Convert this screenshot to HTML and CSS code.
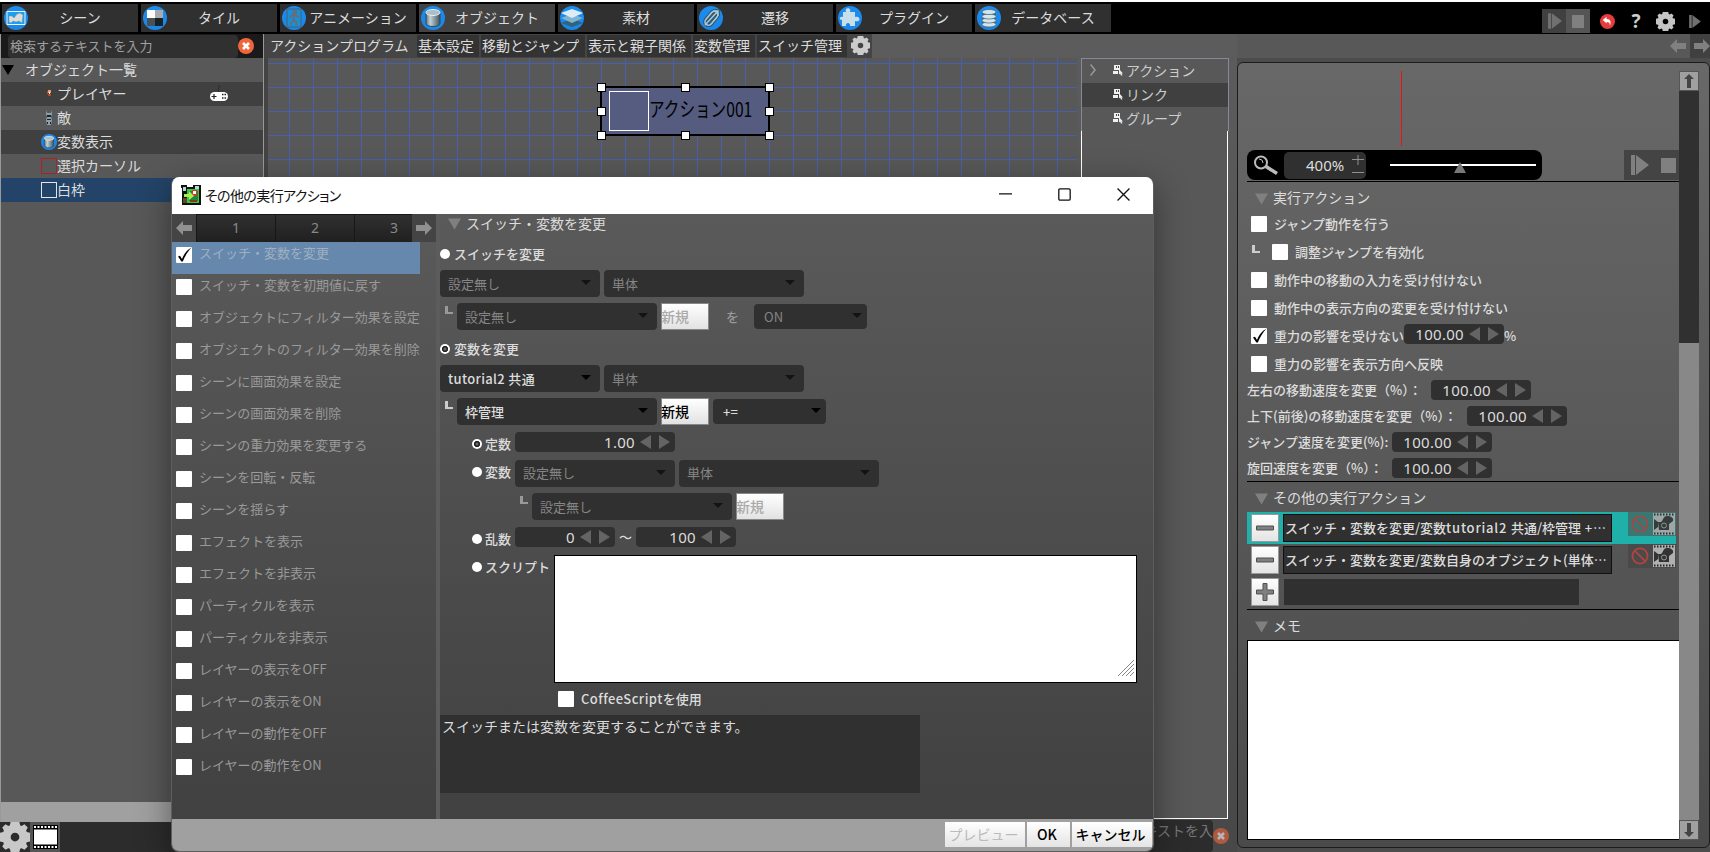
FILE: index.html
```html
<!DOCTYPE html>
<html lang="ja">

<head>
    <meta charset="UTF-8">
    <title>オブジェクト</title>
    <link rel="stylesheet" href="styles.css">
</head>

<body>
    <svg class="defs">
        <linearGradient id="blue" x1="0" y1="0" x2="0" y2="1">
            <stop offset="0" stop-color="#1c8cf0" />
            <stop offset="1" stop-color="#1a86e8" />
        </linearGradient>
        <linearGradient id="steel" x1="0" y1="0" x2="1" y2="0">
            <stop offset="0" stop-color="#5d747c" />
            <stop offset="0.3" stop-color="#c4d2d6" />
            <stop offset="1" stop-color="#3f555e" />
        </linearGradient>
        <symbol id="i-gear" viewBox="0 0 24 24">
            <path fill-rule="evenodd" d="M8.500 0h7l.6 2.600 1.200.5L19.600 1.800 22.200 4.400 20.900 6.700 21.400 7.900 24 8.500v7l-2.600.6-.5 1.200 1.300 2.300-2.600 2.600-2.300-1.300-1.200.5-.6 2.600h-7l-.6-2.600-1.200-.5-2.300 1.300-2.600-2.600 1.300-2.300-.5-1.200L0 15.500v-7l2.600-.6.5-1.200L1.800 4.400 4.400 1.800l2.300 1.300 1.200-.5zM12 8.500a3.500 3.500 0 1 0 0 7 3.500 3.500 0 0 0 0-7z" />
        </symbol>
        <symbol id="i-close" viewBox="0 0 16 16">
            <circle cx="8" cy="8" r="8" fill="#f0663c" />
            <path d="M5 5l6 6M11 5l-6 6" stroke="#fff" stroke-width="2.600" />
        </symbol>
        <symbol id="i-can" viewBox="0 0 24 24">
            <circle cx="12" cy="12" r="12" fill="url(#blue)" />
            <path d="M5 7v10.500c1 4 13 4 14 0V7z" fill="url(#steel)" stroke="#34484f" />
            <ellipse cx="12" cy="6.500" rx="7" ry="3" fill="#aebfc4" stroke="#e8f0f2" />
        </symbol>
        <symbol id="i-play" viewBox="0 0 18 20">
            <path d="M0 0h4v20H0zM5 0l13 10L5 20z" />
        </symbol>
        <symbol id="i-left" viewBox="0 0 16 14">
            <path d="M0 7l7-7v4h9v6H7v4z" />
        </symbol>
        <symbol id="i-right" viewBox="0 0 16 14">
            <path d="M16 7L9 0v4H0v6h9v4z" />
        </symbol>
        <symbol id="i-check" viewBox="0 0 16 16">
            <path d="M2 9.500l2-.7 2 3.200C8 7 10.500 3.500 15.500 .5 11.500 5 9 9 6.800 14.500H5.400z" fill="#000" />
        </symbol>
        <symbol id="i-puppet" viewBox="0 0 10 12">
            <path d="M1 1h6v5H1zM0 7h5v3H0zM6 5l4 4.500H8.500l1 2H8l-1-2-1 1z" fill="#f0f0f0" />
            <path d="M3 2h1v2H3zM5 2h1v2H5z" fill="#444" />
        </symbol>
        <symbol id="i-ban" viewBox="0 0 18 18">
            <g fill="none" stroke-width="1.800">
                <circle cx="9" cy="9" r="7.600" />
                <path d="M3.600 3.600l10.800 10.800" />
            </g>
        </symbol>
        <symbol id="i-cam" viewBox="0 0 22 22">
            <rect width="22" height="22" class="film" />
            <path d="M1 1.500h20M1 20.500h20" stroke="#222" stroke-width="2" stroke-dasharray="1.500 1.500" />
            <path d="M1 6l4 3v5l-4 3zM5 9h3c2-1 2-6 6-6s7 2 6 5l-4 3v6H6zM8 17l-2 3M15 17l2 3" class="body" />
            <circle cx="11" cy="12.500" r="2.500" fill="none" stroke="#999" />
        </symbol>
        <symbol id="i-down" viewBox="0 0 14 12">
            <path d="M0 0h14L7 12z" fill="#808080" />
        </symbol>
    </svg>

    <header class="topbar">
        <nav class="tabs">
            <div class="tab">
                <svg viewBox="0 0 24 24"><circle cx="12" cy="12" r="12" fill="url(#blue)" /><path d="M3 5.500h18v13H3z" fill="#1aa0ee" stroke="#e8f4fb" /><path d="M5 10h3l2 2 3-4 3-1 3 2-1 8-3-2-3 1-3-1-2 2-2-1z" fill="#ddd" stroke="#888" stroke-width=".5" /></svg>
                <span>シーン</span>
            </div>
            <div class="tab">
                <svg viewBox="0 0 24 24"><circle cx="12" cy="12" r="12" fill="url(#blue)" /><path d="M4 4h8v8H4z" fill="#fff" /><path d="M12 4h8v8h-8z" fill="#aaa" /><path d="M4 12h8v8H4z" fill="#4a5258" /><path d="M12 12h8v8h-8z" fill="#16222a" /></svg>
                <span>タイル</span>
            </div>
            <div class="tab">
                <svg viewBox="0 0 24 24"><circle cx="12" cy="12" r="12" fill="url(#blue)" /><path d="M5 3h14v18H5z" fill="#1a90dc" stroke="#47616f" /><g fill="none" stroke="#60707a" stroke-width="2"><circle cx="13" cy="6" r="1.500" /><path d="M8 12l2-3h4l3 3M12.500 9l-1 5 3 2v4M11.500 14L8 19" /></g></svg>
                <span>アニメーション</span>
            </div>
            <div class="tab active">
                <svg><use href="#i-can" /></svg>
                <span>オブジェクト</span>
            </div>
            <div class="tab">
                <svg viewBox="0 0 24 24"><circle cx="12" cy="12" r="12" fill="url(#blue)" /><path d="M1 17l11-4 11 4-11 4z" fill="#33627a" /><path d="M1 12l11-4 11 4-11 5z" fill="#7fb4d0" /><path d="M1 7l11-4 11 4-11 5z" fill="#dcecf4" /></svg>
                <span>素材</span>
            </div>
            <div class="tab">
                <svg viewBox="0 0 24 24"><circle cx="12" cy="12" r="12" fill="url(#blue)" /><g fill="none" stroke="#2f5468" stroke-width="3.600"><rect x="4" y="9" width="16" height="7" rx="3.500" transform="rotate(-50 12 12)" /><path d="M6 19L19 5M14 5h5v5" /></g><g fill="none" stroke="#a8c8d8" stroke-width="1.600"><rect x="4" y="9" width="16" height="7" rx="3.500" transform="rotate(-50 12 12)" /><path d="M6 19L19 5M14 5h5v5" /></g></svg>
                <span>遷移</span>
            </div>
            <div class="tab">
                <svg viewBox="0 0 24 24"><circle cx="12" cy="12" r="12" fill="url(#blue)" /><path d="M5 6h3c-2-5 6-5 4 0h5v5c6-2 6 6 0 4v5h-5c1-4-5-4-4 0H4v-6c-3 0-3-4 1-3z" fill="#c8dfea" /></svg>
                <span>プラグイン</span>
            </div>
            <div class="tab">
                <svg viewBox="0 0 24 24"><circle cx="12" cy="12" r="12" fill="url(#blue)" /><path d="M5 5v14c1 3 13 3 14 0V5z" fill="#1d6da0" /><g fill="#d4e4ea" stroke="#44687a" stroke-width=".7"><ellipse cx="12" cy="18.500" rx="7" ry="2.500" /><ellipse cx="12" cy="14.500" rx="7" ry="2.500" /><ellipse cx="12" cy="10.500" rx="7" ry="2.500" /><ellipse cx="12" cy="6" rx="7" ry="2.500" /></g></svg>
                <span>データベース</span>
            </div>
        </nav>
        <div class="tools">
            <div class="tool dark"><svg class="t-play"><use href="#i-play" /></svg></div>
            <div class="tool mid"><i class="stop"></i></div>
            <div class="tool w34"><svg class="t-undo" viewBox="0 0 16 16"><circle cx="8" cy="8" r="8" fill="#e63c3c" /><path d="M3 6.500L7 3v2.200c4 0 5.500 3 3.500 7.300.2-3-1-4-3.500-4V10z" fill="#fff" /></svg></div>
            <div class="tool w24 help">?</div>
            <div class="tool w34"><svg class="t-gear"><use href="#i-gear" /></svg></div>
            <div class="tool w22"><svg class="t-step"><use href="#i-play" /></svg></div>
        </div>
    </header>

    <main class="main">
        <aside class="objects">
            <div class="search">
                <div class="search-input">検索するテキストを入力</div>
                <svg class="clear"><use href="#i-close" /></svg>
            </div>
            <div class="tree">
                <div class="tree-row root"><i class="tri"></i><span>オブジェクト一覧</span></div>
                <div class="tree-row odd">
                    <svg class="pic" viewBox="0 0 16 16"><path d="M7 4h3v3H7z" fill="#e8a070" /><path d="M6 5h1v3H6zM7 8h3v2H7z" fill="#b44a28" /><path d="M8 6h1v2H8z" fill="#fff" /></svg>
                    <span>プレイヤー</span>
                    <svg class="pad" viewBox="0 0 20 18"><path d="M9 0q3 1 1 3t0 4" fill="none" stroke="#2c2c2c" /><rect x="1" y="7" width="18" height="9" rx="4.500" fill="#fff" /><path d="M5 9v5M2.500 11.500h5" stroke="#222" stroke-width="1.200" /><path d="M13 9.500h4M13 13h4" stroke="#222" stroke-width="1.500" stroke-dasharray="1.500 1" /></svg>
                </div>
                <div class="tree-row">
                    <svg class="pic" viewBox="0 0 16 16"><path d="M5 0l1 3h4l1-3v4l-1 3 1 3-1 5H6l-1-5 1-3-1-3z" fill="#8ba0ac" /><path d="M6 5h4v2H6zM6 9h4v1H6zM6 12h1v2H6zM9 12h1v2H9z" fill="#1c242a" /></svg>
                    <span>敵</span>
                </div>
                <div class="tree-row odd"><svg class="pic"><use href="#i-can" /></svg><span>変数表示</span></div>
                <div class="tree-row"><i class="pic frame red"></i><span>選択カーソル</span></div>
                <div class="tree-row selected"><i class="pic frame white"></i><span>白枠</span></div>
            </div>
            <div class="hscroll"></div>
            <div class="status">
                <svg class="s-gear"><use href="#i-gear" /></svg>
                <div class="s-film"><svg viewBox="0 0 25 24"><path d="M0 0h25v24H0z" /><path d="M1 4.500h23v15H1z" fill="#fff" /><path d="M1 2h23M1 22h23" stroke="#fff" stroke-width="2" stroke-dasharray="2 1.500" /></svg></div>
            </div>
        </aside>

        <section class="center">
            <div class="subtabs">
                <div class="subtab current">アクションプログラム</div>
                <div class="subtab w62">基本設定</div>
                <div class="subtab w104">移動とジャンプ</div>
                <div class="subtab w104">表示と親子関係</div>
                <div class="subtab w62">変数管理</div>
                <div class="subtab w90">スイッチ管理</div>
                <div class="subtab gear"><svg><use href="#i-gear" /></svg></div>
            </div>
            <div class="work">
                <div class="canvas">
                    <div class="node">
                        <i class="thumb"></i>
                        <span>アクション001</span>
                        <i class="h h1"></i><i class="h h2"></i><i class="h h3"></i><i class="h h4"></i>
                        <i class="h h5"></i><i class="h h6"></i><i class="h h7"></i><i class="h h8"></i>
                    </div>
                </div>
                <div class="palette">
                    <div class="palette-head">
                        <div class="p-row"><svg class="chev" viewBox="0 0 6 12"><path d="M.5 .5L5 6 .5 11.500" /></svg><svg class="pup"><use href="#i-puppet" /></svg>アクション</div>
                        <div class="p-row odd"><svg class="pup"><use href="#i-puppet" /></svg>リンク</div>
                        <div class="p-row"><svg class="pup"><use href="#i-puppet" /></svg>グループ</div>
                    </div>
                    <div class="palette-body"></div>
                    <div class="palette-search">
                        <div class="ps-input">キストを入</div>
                        <svg><use href="#i-close" /></svg>
                    </div>
                </div>
            </div>
        </section>

        <aside class="side">
            <div class="pager-mini"><div><svg><use href="#i-left" /></svg></div><div class="on"><svg><use href="#i-right" /></svg></div></div>
            <div class="panel">
                <div class="panel-body">
                    <div class="preview"><i></i></div>
                    <div class="zoombar">
                        <div class="zoom">
                            <svg class="lens" viewBox="0 0 24 20"><g fill="none" stroke="#bbb"><circle cx="7" cy="7.500" r="6" stroke-width="2" /><path d="M12 11.500l11 7" stroke-width="3.500" /><path d="M5 4q4 0 4 4" stroke-width="1" /></g></svg>
                            <div class="zoom-val">400%<svg viewBox="0 0 12 20"><path d="M6 0v10M0 4.500h12M0 17.500h12" /></svg></div>
                            <div class="slider"><svg viewBox="0 0 12 11"><path d="M6 0l6 11H0z" /></svg></div>
                        </div>
                        <div class="transport"><svg class="tp"><use href="#i-play" /></svg><i></i></div>
                    </div>
                    <div class="group-head"><svg><use href="#i-down" /></svg>実行アクション</div>
                    <div class="opt"><i class="cb"></i>ジャンプ動作を行う</div>
                    <div class="opt"><i class="ell"></i><i class="cb"></i>調整ジャンプを有効化</div>
                    <div class="opt"><i class="cb"></i>動作中の移動の入力を受け付けない</div>
                    <div class="opt"><i class="cb"></i>動作中の表示方向の変更を受け付けない</div>
                    <div class="opt"><i class="cb"><svg><use href="#i-check" /></svg></i>重力の影響を受けない<div class="spin up"><b>100.00</b><i class="la"></i><i class="ra"></i></div>%</div>
                    <div class="opt"><i class="cb"></i>重力の影響を表示方向へ反映</div>
                    <div class="speeds">
                        <div class="speed"><span>左右の移動速度を変更（%）：</span><div class="spin"><b>100.00</b><i class="la"></i><i class="ra"></i></div></div>
                        <div class="speed"><span class="l2">上下(前後)の移動速度を変更（%）：</span><div class="spin"><b>100.00</b><i class="la"></i><i class="ra"></i></div></div>
                        <div class="speed"><span class="l3">ジャンプ速度を変更(%):</span><div class="spin"><b>100.00</b><i class="la"></i><i class="ra"></i></div></div>
                        <div class="speed"><span class="l3">旋回速度を変更（%）：</span><div class="spin"><b>100.00</b><i class="la"></i><i class="ra"></i></div></div>
                    </div>
                    <div class="group-head lined"><svg><use href="#i-down" /></svg>その他の実行アクション</div>
                    <div class="act selected">
                        <div class="sq"><svg viewBox="0 0 18 18"><path d="M.5 7h17v4H.5z" /></svg></div>
                        <div class="act-text">スイッチ・変数を変更/変数<span>tutorial2 </span>共通/枠管理<span> +</span>…</div>
                        <div class="act-icons"><svg class="ban"><use href="#i-ban" /></svg><svg class="cam"><use href="#i-cam" /></svg></div>
                    </div>
                    <div class="act">
                        <div class="sq"><svg viewBox="0 0 18 18"><path d="M.5 7h17v4H.5z" /></svg></div>
                        <div class="act-text">スイッチ・変数を変更/変数自身のオブジェクト(単体…</div>
                        <div class="act-icons"><svg class="ban"><use href="#i-ban" /></svg><svg class="cam"><use href="#i-cam" /></svg></div>
                    </div>
                    <div class="act">
                        <div class="sq"><svg viewBox="0 0 18 18"><path d="M7 .5h4V7h6.500v4H11v6.500H7V11H.5V7H7z" /></svg></div>
                        <div class="act-empty"></div>
                    </div>
                    <div class="group-head lined memo-head"><svg><use href="#i-down" /></svg>メモ</div>
                    <div class="memo"></div>
                </div>
                <div class="vscroll">
                    <div class="vs-btn"><svg viewBox="0 0 10 14"><path d="M5 0l5 5H7v9H3V5H0z" /></svg></div>
                    <div class="vs-thumb"></div>
                    <div class="vs-track"></div>
                    <div class="vs-btn"><svg viewBox="0 0 10 14"><path d="M5 14l5-5H7V0H3v9H0z" /></svg></div>
                </div>
            </div>
        </aside>
    </main>

    <div class="dialog">
        <div class="titlebar">
            <svg class="app" viewBox="0 0 20 20"><path d="M0 0h6v2h6V0h8v20H1V3H0z" fill="#111" /><path d="M2 2h3v4H2zM14 1h4v4h-4z" fill="#b8d4dc" /><path d="M6 4h12v14H6z" fill="#3cc83c" /><path d="M8 6h9v10H8z" fill="#1c8a3c" /><path d="M11 5h5v6h-5z" fill="#c83c28" /><path d="M12 6h3v3h-3z" fill="#fff" /><path d="M3 9h5V6l5 5-5 4v-3H3z" fill="#a8f050" /><path d="M2 13h4v5H2z" fill="#5c4a24" /><path d="M9 15h7v2H9z" fill="#7c3c1c" /></svg>
            <span>その他の実行アクション</span>
            <div class="win-btns">
                <svg viewBox="0 0 12 12"><path d="M0 5.500h12" /></svg>
                <svg viewBox="0 0 12 12"><rect x=".75" y=".75" width="10.500" height="10.500" rx="1" /></svg>
                <svg viewBox="0 0 12 12"><path d="M.5 .5l11 11M11.500 .5l-11 11" /></svg>
            </div>
        </div>
        <div class="dlg-main">
            <div class="dlg-left">
                <div class="pages">
                    <div class="pg-arrow"><svg><use href="#i-left" /></svg></div>
                    <div class="pg">1</div>
                    <div class="pg">2</div>
                    <div class="pg last">3</div>
                    <div class="pg-arrow"><svg><use href="#i-right" /></svg></div>
                </div>
                <div class="item selected"><i class="cb"><svg><use href="#i-check" /></svg></i>スイッチ・変数を変更</div>
                <div class="item"><i class="cb"></i>スイッチ・変数を初期値に戻す</div>
                <div class="item"><i class="cb"></i>オブジェクトにフィルター効果を設定</div>
                <div class="item"><i class="cb"></i>オブジェクトのフィルター効果を削除</div>
                <div class="item"><i class="cb"></i>シーンに画面効果を設定</div>
                <div class="item"><i class="cb"></i>シーンの画面効果を削除</div>
                <div class="item"><i class="cb"></i>シーンの重力効果を変更する</div>
                <div class="item"><i class="cb"></i>シーンを回転・反転</div>
                <div class="item"><i class="cb"></i>シーンを揺らす</div>
                <div class="item"><i class="cb"></i>エフェクトを表示</div>
                <div class="item"><i class="cb"></i>エフェクトを非表示</div>
                <div class="item"><i class="cb"></i>パーティクルを表示</div>
                <div class="item"><i class="cb"></i>パーティクルを非表示</div>
                <div class="item"><i class="cb"></i>レイヤーの表示をOFF</div>
                <div class="item"><i class="cb"></i>レイヤーの表示をON</div>
                <div class="item"><i class="cb"></i>レイヤーの動作をOFF</div>
                <div class="item"><i class="cb"></i>レイヤーの動作をON</div>
            </div>
            <div class="dlg-right">
                <div class="dlg-head"><svg><use href="#i-down" /></svg>スイッチ・変数を変更</div>
                <div class="line r-sw"><i class="radio"></i>スイッチを変更</div>
                <div class="line sel-row off"><div class="select w160">設定無し</div><div class="select w200">単体</div></div>
                <div class="line sub-row off">
                    <i class="ell"></i><div class="select w200">設定無し</div><div class="new">新規</div><span class="wo">を</span><div class="select small">ON</div>
                </div>
                <div class="line r-var"><i class="radio on"></i>変数を変更</div>
                <div class="line sel-row"><div class="select w160 latin">tutorial2 共通</div><div class="select w200 dim">単体</div></div>
                <div class="line sub-row">
                    <i class="ell"></i><div class="select w200">枠管理</div><div class="new">新規</div><div class="select small">+=</div>
                </div>
                <div class="kinds">
                    <div class="kind k1"><i class="radio on"></i><label>定数</label><div class="spin w160"><b>1.00</b><i class="la"></i><i class="ra"></i></div></div>
                    <div class="kind k2"><i class="radio"></i><label>変数</label><div class="sel-row off"><div class="select w160">設定無し</div><div class="select w200">単体</div></div></div>
                    <div class="kind k3 sub-row off"><i class="ell"></i><div class="select w200">設定無し</div><div class="new">新規</div></div>
                    <div class="kind k4"><i class="radio"></i><label>乱数</label><div class="spin"><b>0</b><i class="la"></i><i class="ra"></i></div><span class="tilde">～</span><div class="spin"><b>100</b><i class="la"></i><i class="ra"></i></div></div>
                    <div class="kind k5">
                        <i class="radio"></i><label class="wide">スクリプト</label>
                        <div class="script"><svg viewBox="0 0 16 16"><path d="M0 16L16 0M4 16L16 4M8 16l8-8M12 16l4-4" /></svg></div>
                    </div>
                    <div class="coffee"><i class="cb"></i><span>CoffeeScript</span>を使用</div>
                </div>
                <div class="info">スイッチまたは変数を変更することができます。</div>
            </div>
        </div>
        <div class="dlg-foot">
            <div class="btn disabled">プレビュー</div>
            <div class="btn ok">OK</div>
            <div class="btn">キャンセル</div>
        </div>
    </div>
</body>

</html>
```

FILE: styles.css
```css
* {
    box-sizing: border-box;
}

body {
    margin: 0;
    width: 1710px;
    height: 852px;
    overflow: hidden;
    position: relative;
    border-top: 2px solid #fff;
    background: #4c4c4c;
    color: #dcdcdc;
    font-family: "Noto Sans CJK JP", "Noto Sans", sans-serif;
    font-size: 14px;
    line-height: 20px;
    white-space: nowrap;
}

i {
    font-style: normal;
    flex: none;
}

svg {
    display: block;
    flex: none;
}

.defs {
    position: absolute;
    width: 0;
    height: 0;
}

/* top bar */
.topbar {
    height: 32px;
    background: #000;
    display: flex;
    justify-content: space-between;
    padding: 2px 0 0 2px;
}

.tabs {
    display: flex;
    gap: 3px;
}

.tab {
    width: 136px;
    height: 28px;
    background: #303030;
    display: flex;
    align-items: center;
    padding: 0 6px 0 2px;
}

.tab.active {
    background: #434343;
}

.tab svg {
    width: 24px;
    height: 24px;
}

.tab span {
    flex: 1;
    text-align: center;
    padding-bottom: 2px;
}

.tools {
    display: flex;
    padding-top: 5px;
    height: 29px;
    fill: #707070;
}

.tool {
    width: 24px;
    height: 24px;
    display: flex;
    align-items: center;
    justify-content: center;
}

.tool.dark {
    background: #404040;
}

.tool.mid {
    background: #555;
}

.tool.w34 {
    width: 34px;
}

.tool.w22 {
    width: 28px;
    padding-right: 2px;
}

.stop {
    width: 12px;
    height: 13px;
    background: #808080;
}

.t-play {
    width: 14px;
    height: 16px;
    margin-left: 2px;
}

.t-undo {
    width: 15px;
    height: 15px;
}

.t-gear {
    width: 19px;
    height: 19px;
    fill: #c4c4c4;
}

.t-step {
    width: 12px;
    height: 13px;
}

.help {
    color: #ccc;
    font: bold 19px "Noto Sans", sans-serif;
}

.main {
    height: 818px;
    display: flex;
}

/* object tree */
.objects {
    width: 264px;
    border-left: 1px solid #999;
    border-right: 1px solid #999;
    display: flex;
    flex-direction: column;
    background: #585858;
}

.search {
    height: 24px;
    background: #1a1a1a;
    display: flex;
    align-items: center;
    padding-left: 7px;
}

.search-input {
    width: 230px;
    height: 23px;
    border-radius: 4px;
    background: #303030;
    color: #a0a0a0;
    font-size: 13px;
    line-height: 21px;
    padding-left: 2px;
}

.clear {
    width: 16px;
    height: 16px;
}

.tree {
    flex: 1;
}

.tree-row {
    height: 24px;
    display: flex;
    align-items: center;
    padding-left: 40px;
}

.tree-row span {
    padding-bottom: 2px;
}

.tree-row.root {
    padding-left: 1px;
    gap: 11px;
}

.tree-row.odd {
    background: #404040;
}

.tree-row.selected {
    background: #234468;
}

.tri {
    border: 6px solid transparent;
    border-top: 10px solid #000;
    border-bottom: 0;
}

.pic {
    width: 16px;
    height: 16px;
}

.frame.red {
    border: 1px solid #a82424;
}

.frame.white {
    border: 1px solid #dde4ec;
}

.pad {
    width: 20px;
    height: 18px;
    margin-left: 82px;
}

.hscroll {
    height: 20px;
    background: #a0a0a0;
}

.status {
    height: 30px;
    background: #2c2c2c;
    display: flex;
    margin: 0 -1px;
}

.s-gear {
    width: 30px;
    height: 30px;
    fill: #c8c8c8;
}

.s-film {
    width: 30px;
    background: #555;
    padding: 3px;
}

.s-film svg {
    width: 25px;
    height: 24px;
}

/* center */
.center {
    width: 973px;
    background: linear-gradient(#5c5c5c, #484848);
    border-left: 4px solid #444;
}

.subtabs {
    height: 24px;
    width: 604px;
    background: #454545;
    display: flex;
    gap: 2px;
}

.subtab {
    background: #333;
    height: 22px;
    margin-top: 1px;
    line-height: 20px;
    padding-left: 1px;
}

.subtab.current {
    background: none;
    width: 147px;
    padding-left: 2px;
}

.subtab.w62 {
    width: 62px;
}

.subtab.w104 {
    width: 104px;
}

.subtab.w90 {
    width: 90px;
}

.subtab.gear {
    width: 21px;
    background: none;
}

.subtab.gear svg {
    width: 19px;
    height: 19px;
    margin: 1px 0 0 1px;
    fill: #ccc;
}

.work {
    height: 794px;
    display: flex;
    gap: 4px;
}

.canvas {
    width: 809px;
    padding: 28px 0 0 332px;
    background:
        linear-gradient(90deg, #4860ac 1px, transparent 1px) 21px 0 / 24px 24px,
        linear-gradient(#4860ac 1px, transparent 1px) 0 5px / 24px 24px,
        #585858;
}

.node {
    position: relative;
    width: 170px;
    height: 50px;
    border: 2px solid #000;
    border-radius: 5px;
    background: #555c80;
    display: flex;
    align-items: center;
    padding-left: 7px;
    color: #000;
}

.node .thumb {
    width: 40px;
    height: 40px;
    border: 1px solid #fff;
}

.node span {
    width: 103px;
    font-size: 20px;
    padding-bottom: 5px;
    transform: scaleX(.78);
    transform-origin: 0 50%;
}

.h {
    position: absolute;
    width: 9px;
    height: 9px;
    margin: -5px;
    background: #fff;
    border: 1px solid #000;
}

.h1, .h4, .h6 { left: 0; }
.h2, .h7 { left: 84px; }
.h3, .h5, .h8 { left: 168px; }
.h1, .h2, .h3 { top: 0; }
.h4, .h5 { top: 24px; }
.h6, .h7, .h8 { top: 48px; }

.palette {
    width: 148px;
    display: flex;
    flex-direction: column;
}

.palette-head {
    border: 1px solid #888896;
    border-bottom: 0;
    background: #585858;
}

.p-row {
    height: 24px;
    display: flex;
    align-items: center;
    padding: 0 0 2px 31px;
    gap: 3px;
    color: #ccc;
}

.p-row:first-child {
    padding-left: 8px;
}

.p-row.odd {
    background: #404040;
}

.chev {
    width: 6px;
    height: 12px;
    margin-right: 14px;
    fill: none;
    stroke: #999;
    stroke-width: 1.5;
}

.pup {
    width: 10px;
    height: 12px;
}

.palette-body {
    height: 688px;
    border: 1px solid #fff;
    border-top: 0;
    margin-right: 1px;
    background: #585858;
}

.palette-search {
    flex: 1;
    display: flex;
    align-items: center;
}

.ps-input {
    width: 132px;
    height: 32px;
    border-radius: 4px;
    background: #2c2c2c;
    color: #777;
    text-align: right;
    overflow: hidden;
}

.palette-search svg {
    width: 16px;
    height: 16px;
    opacity: .6;
}

/* right side */
.side {
    width: 473px;
}

.pager-mini {
    height: 24px;
    display: flex;
    justify-content: flex-end;
    background: #585858;
    fill: #808080;
}

.pager-mini div {
    width: 20px;
    display: flex;
    align-items: center;
}

.pager-mini .on {
    background: #404040;
    padding-left: 4px;
}

.pager-mini svg {
    width: 16px;
    height: 14px;
}

.panel {
    margin-top: 4px;
    height: 786px;
    border: 1px solid #1c1c1c;
    border-radius: 6px;
    background: linear-gradient(#686868, #4a4a4a);
    display: flex;
    padding: 8px 0 0 9px;
    font-size: 13px;
}

.panel-body {
    width: 432px;
}

.preview {
    height: 79px;
    padding-left: 154px;
}

.preview i {
    display: block;
    width: 1px;
    height: 75px;
    background: #f01010;
}

.zoombar {
    height: 32px;
    border-bottom: 1px solid #000;
    display: flex;
    justify-content: space-between;
    align-items: flex-start;
}

.zoom {
    width: 295px;
    height: 30px;
    background: #000;
    border-radius: 8px;
    display: flex;
    align-items: center;
    padding-left: 7px;
}

.lens {
    width: 24px;
    height: 20px;
}

.zoom-val {
    width: 82px;
    height: 27px;
    margin: 0 24px 0 6px;
    border-radius: 5px;
    background: #303030;
    font: 15px/27px "Noto Sans", sans-serif;
    display: flex;
    align-items: center;
    padding-left: 22px;
    gap: 8px;
}

.zoom-val svg {
    width: 12px;
    height: 20px;
    stroke: #909090;
}

.slider {
    width: 146px;
    height: 2px;
    background: #fff;
    padding-left: 64px;
}

.slider svg {
    width: 12px;
    height: 11px;
    margin-top: -2px;
    fill: #777;
}

.transport {
    width: 55px;
    height: 30px;
    background: #444;
    display: flex;
    align-items: center;
    gap: 12px;
    padding-left: 7px;
    fill: #808080;
}

.tp {
    width: 18px;
    height: 20px;
}

.transport i {
    width: 15px;
    height: 15px;
    background: #808080;
}

.group-head {
    height: 28px;
    display: flex;
    align-items: center;
    gap: 5px;
    padding: 2px 0 0 8px;
    font-size: 14px;
}

.group-head svg,
.dlg-head svg {
    width: 13px;
    height: 12px;
    margin-top: 3px;
}

.group-head.lined {
    height: 31px;
    border-top: 1px solid #000;
    padding-top: 0;
}

.opt {
    height: 28px;
    display: flex;
    align-items: center;
    padding-left: 4px;
    font-weight: 500;
}

.cb {
    width: 16px;
    height: 16px;
    margin-right: 7px;
    background: #fff;
    border-radius: 1px;
}

.cb svg {
    width: 16px;
    height: 16px;
}

.ell {
    width: 8px;
    height: 8px;
    border-left: 3px solid #ccc;
    border-bottom: 2px solid #ccc;
}

.opt .ell {
    margin: -6px 12px 0 1px;
}

.spin {
    width: 100px;
    height: 20px;
    border-radius: 4px;
    background: #303030;
    display: flex;
    align-items: center;
    justify-content: flex-end;
    padding-right: 5px;
}

.spin.up {
    margin-top: -4px;
}

.spin.w160 {
    width: 160px;
}

.spin b {
    font: 15px/20px "Noto Sans", sans-serif;
    letter-spacing: .3px;
    margin-right: 5px;
}

.la,
.ra {
    border: 7px solid transparent;
}

.la {
    border-right: 11px solid #646464;
    border-left: 0;
    margin-right: 8px;
}

.ra {
    border-left: 11px solid #646464;
    border-right: 0;
}

.speeds {
    margin-top: -1px;
    height: 104px;
    font-weight: 500;
}

.speed {
    height: 26px;
    display: flex;
    align-items: center;
}

.speed span {
    width: 184px;
}

.speed .l2 {
    width: 220px;
}

.speed .l3 {
    width: 145px;
}

.act {
    width: 429px;
    height: 32px;
    display: flex;
    padding: 2px 0 0 4px;
}

.act.selected {
    background: #20b0aa;
}

.sq {
    width: 28px;
    height: 28px;
    background: linear-gradient(#fff, #e4e4e4);
    border: 1px solid #999;
    padding: 4px;
    margin-right: 4px;
}

.sq svg {
    width: 18px;
    height: 18px;
    fill: #808080;
    stroke: #505050;
}

.act-text {
    width: 329px;
    height: 28px;
    border: 1px solid #101010;
    background: #303030;
    padding-left: 1px;
    line-height: 26px;
    font-weight: 500;
    overflow: hidden;
}

.act-text span {
    letter-spacing: .8px;
}

.act-empty {
    width: 295px;
    height: 26px;
    margin: 1px;
    background: #303030;
}

.act-icons {
    width: 48px;
    height: 24px;
    margin: -2px 0 0 16px;
    background: #4a4a4a;
    display: flex;
    align-items: center;
    padding-left: 3px;
    gap: 4px;
}

.act-icons svg {
    width: 18px;
    height: 18px;
    stroke: #b04440;
}

.act-icons .cam {
    width: 22px;
    height: 22px;
    stroke: none;
}

.film {
    fill: #b0b0b0;
}

.body {
    fill: #333;
}

.selected .act-icons {
    background: #3c7672;
}

.selected .act-icons svg {
    opacity: .85;
}

.memo-head {
    margin-top: 1px;
}

.memo {
    height: 200px;
    background: #fff;
    border: 1px solid #000;
    border-right: 0;
}

.vscroll {
    width: 20px;
    height: 769px;
    display: flex;
    flex-direction: column;
    background: #303030;
}

.vs-btn {
    height: 20px;
    background: #a0a0a0;
    border: 1px solid #555;
    padding: 2px 4px;
}

.vs-btn svg {
    width: 10px;
    height: 14px;
    fill: #444;
}

.vs-thumb {
    height: 252px;
}

.vs-track {
    flex: 1;
    background: #888;
}

/* dialog window floating over the editor */
.dialog {
    position: absolute;
    left: 171px;
    top: 175px;
    width: 983px;
    height: 675px;
    border: 1px solid #5e5e5e;
    border-top: 0;
    border-radius: 8px;
    overflow: hidden;
    box-shadow: 0 10px 34px rgba(0, 0, 0, .42);
}

.titlebar {
    height: 37px;
    background: #fff;
    color: #111;
    display: flex;
    align-items: center;
    padding: 0 23px 2px 9px;
    font-feature-settings: "palt";
}

.app {
    width: 20px;
    height: 20px;
    margin-right: 4px;
}

.titlebar span {
    letter-spacing: -.6px;
}

.win-btns {
    margin-left: auto;
    display: flex;
    gap: 46px;
}

.win-btns svg {
    width: 13px;
    height: 13px;
    fill: none;
    stroke: #111;
    stroke-width: 1.2;
}

.dlg-main {
    height: 605px;
    display: flex;
    background: linear-gradient(#5a5a5a, #414141);
}

.dlg-left {
    width: 268px;
    border-right: 4px solid #5c5c5c;
    font-size: 13px;
    color: #999;
}

.pages {
    height: 28px;
    display: flex;
    font: 14px/28px "Noto Sans", sans-serif;
    color: #888;
}

.pg-arrow {
    width: 24px;
    background: #444;
    padding: 7px 0 0 4px;
}

.pg-arrow svg {
    width: 16px;
    height: 14px;
    fill: #909090;
}

.pg {
    width: 79px;
    text-align: center;
    background: linear-gradient(#303030, #202020);
    border: 1px solid #141818;
    border-width: 1px 0 0 1px;
    line-height: 26px;
}

.pg.last {
    width: 58px;
    padding-left: 21px;
}

.item {
    width: 248px;
    height: 32px;
    display: flex;
    align-items: center;
    padding: 0 0 10px 4px;
}

.item .cb {
    margin: 3px 7px 0 0;
}

.item.selected {
    background: #6688ac;
    color: #9fb0c2;
}

.dlg-right {
    flex: 1;
    font-size: 13px;
    font-weight: 500;
}

.dlg-head {
    height: 21px;
    display: flex;
    align-items: center;
    gap: 5px;
    padding: 0 0 4px 8px;
    font-size: 14px;
    font-weight: 400;
}

.line,
.kind,
.sel-row {
    display: flex;
    align-items: center;
}

.radio {
    width: 10px;
    height: 10px;
    margin-right: 4px;
    border-radius: 50%;
    background: #fff;
}

.radio.on {
    background: radial-gradient(circle, #666 0 1px, #222 2px 2.8px, #fff 3.4px);
}

.r-sw {
    height: 35px;
    padding-top: 2px;
}

.r-var {
    height: 35px;
    padding-top: 2px;
}

.sel-row {
    height: 27px;
    gap: 4px;
}

.sub-row {
    height: 33px;
    padding: 6px 0 0 5px;
    gap: 4px;
}

.sub-row .ell {
    margin: -13px 0 0 0;
}

.select {
    width: 200px;
    height: 27px;
    border-radius: 4px;
    background: #303030;
    padding: 0 9px 0 8px;
    display: flex;
    align-items: center;
    justify-content: space-between;
}

.select::after {
    content: "";
    border: 5px solid transparent;
    border-top: 5px solid #000;
    border-bottom: 0;
    margin-top: -2px;
}

.select.w160 {
    width: 160px;
}

.select.small {
    width: 113px;
    height: 25px;
    padding: 0 5px 0 10px;
}

.latin {
    letter-spacing: .35px;
}

.off .select,
.select.dim {
    color: #858585;
    font-weight: 400;
}

.off .select::after,
.dim::after {
    opacity: .6;
}

.off .ell {
    border-color: #999;
}

.new {
    width: 48px;
    height: 27px;
    background: linear-gradient(#fff, #e2e2e2);
    border: 1px solid #888;
    color: #000;
    font-size: 14px;
    line-height: 25px;
    text-indent: -1px;
}

.off .new {
    color: #aaa;
}

.wo {
    width: 37px;
    padding-left: 13px;
    color: #999;
}

.kinds {
    padding-left: 32px;
}

.kind label {
    width: 30px;
}

.kind .radio {
    margin-right: 3px;
}

.k1 {
    height: 34px;
}

.k1 .radio,
.k1 label,
.k4 .radio,
.k4 label {
    margin-top: 3px;
}

.k2 {
    height: 28px;
}

.k2 .radio,
.k2 label {
    margin-top: -3px;
}

.k3 {
    padding-left: 48px;
}

.k4 {
    height: 34px;
}

.tilde {
    width: 21px;
    text-align: center;
}

.k5 {
    height: 129px;
    align-items: flex-start;
    padding-top: 1px;
}

.k5 .radio {
    margin-top: 7px;
}

.kind label.wide {
    width: 69px;
    padding-top: 2px;
}

.script {
    width: 583px;
    height: 128px;
    background: #fff;
    border: 1px solid #000;
    display: flex;
    align-items: flex-end;
    justify-content: flex-end;
    padding: 0 2px 6px 0;
}

.script svg {
    width: 16px;
    height: 16px;
    stroke: #888;
    fill: none;
}

.coffee {
    height: 32px;
    display: flex;
    align-items: center;
    padding-left: 86px;
}

.coffee span {
    letter-spacing: .45px;
}

.info {
    width: 480px;
    height: 78px;
    background: #303030;
    padding: 1px 2px;
    font-size: 14px;
    font-weight: 400;
}

.dlg-foot {
    height: 33px;
    background: #a0a0a0;
    display: flex;
    justify-content: flex-end;
    gap: 2px;
    padding: 3px 1px 0 0;
}

.btn {
    width: 80px;
    height: 25px;
    background: linear-gradient(#fff, #e4e4e4);
    color: #000;
    text-align: center;
    line-height: 25px;
    padding-right: 3px;
    font-weight: 500;
}

.btn.ok {
    width: 43px;
}

.btn.disabled {
    color: #bbb;
    font-weight: 400;
}
```
